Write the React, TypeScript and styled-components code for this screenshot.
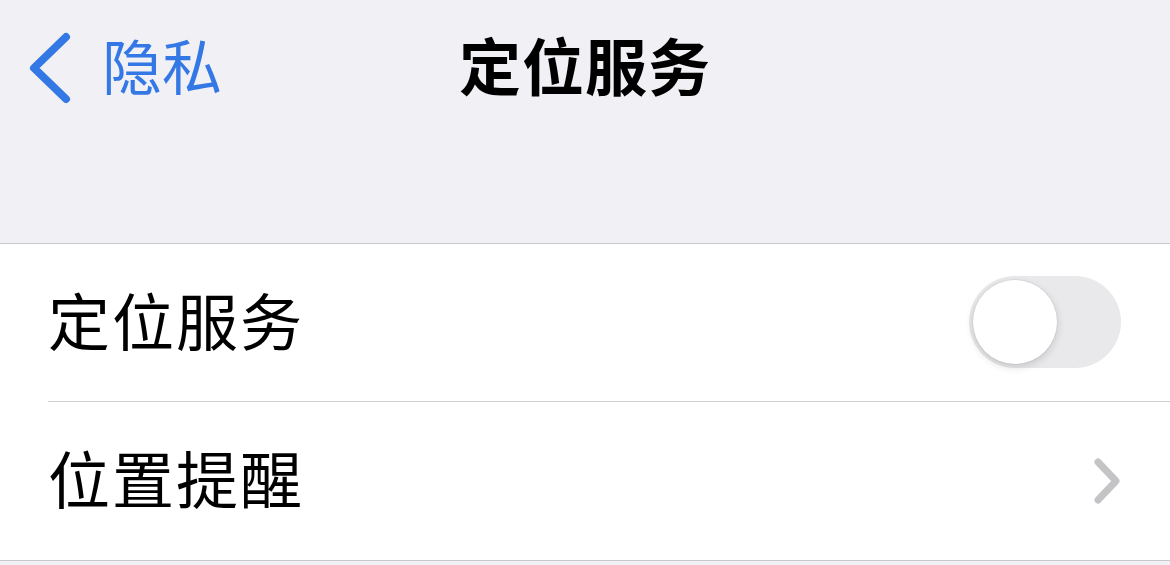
import React, { useState } from 'react';
import styled, { createGlobalStyle } from 'styled-components';

const GlobalStyle = createGlobalStyle`
  html, body {
    margin: 0;
    padding: 0;
    background: #f0f0f5;
    font-family: "Noto Sans CJK SC", "Noto Sans", sans-serif;
  }
`;

const Screen = styled.div`
  width: 1170px;
  height: 565px;
  overflow: hidden;
  background: #f0f0f5;
`;

const NavBar = styled.header`
  position: relative;
  height: 127px;
  padding-bottom: 8px;
  display: flex;
  align-items: center;
  justify-content: center;
  margin-bottom: 108px;
`;

const BackButton = styled.button`
  position: absolute;
  left: 26px;
  top: 30px;
  display: flex;
  align-items: center;
  gap: 28px;
  padding: 0;
  border: none;
  background: none;
  color: #3478e6;
  font-family: inherit;
  font-size: 60px;
  line-height: 74px;
  cursor: pointer;

  span {
    position: relative;
    top: -3px;
  }
`;

const Title = styled.h1`
  margin: 0;
  font-size: 62px;
  font-weight: 700;
  color: #000;
  line-height: 74px;
  letter-spacing: 1px;
`;

const Group = styled.section`
  background: #fff;
  border-top: 1px solid #c8c8cc;
  border-bottom: 1px solid #c8c8cc;
`;

const Row = styled.div<{ $divider?: boolean }>`
  height: 158px;
  box-sizing: border-box;
  display: flex;
  align-items: center;
  justify-content: space-between;
  padding: 0 48px 0 48px;
  position: relative;

  &::after {
    content: '';
    display: ${p => (p.$divider ? 'block' : 'none')};
    position: absolute;
    left: 48px;
    right: 0;
    bottom: 0;
    height: 1px;
    background: #cfcfd3;
  }
`;

const Label = styled.span`
  font-size: 62px;
  color: #000;
  line-height: 74px;
  letter-spacing: 2px;
  margin-bottom: 9px;
`;

const Track = styled.button<{ $on: boolean }>`
  position: relative;
  width: 152px;
  height: 92px;
  margin-right: 1px;
  margin-bottom: 2px;
  border-radius: 46px;
  border: none;
  padding: 0;
  background: ${p => (p.$on ? '#34c759' : '#e9e9eb')};
  cursor: pointer;
`;

const Knob = styled.span<{ $on: boolean }>`
  position: absolute;
  top: 4px;
  left: ${p => (p.$on ? '64px' : '4px')};
  width: 84px;
  height: 84px;
  border-radius: 50%;
  background: #fff;
  box-shadow: 0 3px 8px rgba(0, 0, 0, 0.15), 0 0 0 1px rgba(0, 0, 0, 0.04);
`;

const ChevronLeft = () => (
  <svg width="48" height="74" viewBox="0 0 48 74">
    <path
      d="M40 7 L8 38 L40 69"
      fill="none"
      stroke="#3478e6"
      strokeWidth="8"
      strokeLinecap="round"
      strokeLinejoin="round"
    />
  </svg>
);

const ChevronRight = () => (
  <svg width="30" height="50" viewBox="0 0 30 50">
    <path
      d="M6 6 L24 25 L6 44"
      fill="none"
      stroke="#c4c4c7"
      strokeWidth="7"
      strokeLinecap="round"
      strokeLinejoin="round"
    />
  </svg>
);

export default function App() {
  const [enabled, setEnabled] = useState(false);

  return (
    <Screen>
      <GlobalStyle />
      <NavBar>
        <BackButton>
          <ChevronLeft />
          <span>隐私</span>
        </BackButton>
        <Title>定位服务</Title>
      </NavBar>
      <Group>
        <Row $divider>
          <Label>定位服务</Label>
          <Track $on={enabled} onClick={() => setEnabled(v => !v)}>
            <Knob $on={enabled} />
          </Track>
        </Row>
        <Row>
          <Label>位置提醒</Label>
          <ChevronRight />
        </Row>
      </Group>
    </Screen>
  );
}
